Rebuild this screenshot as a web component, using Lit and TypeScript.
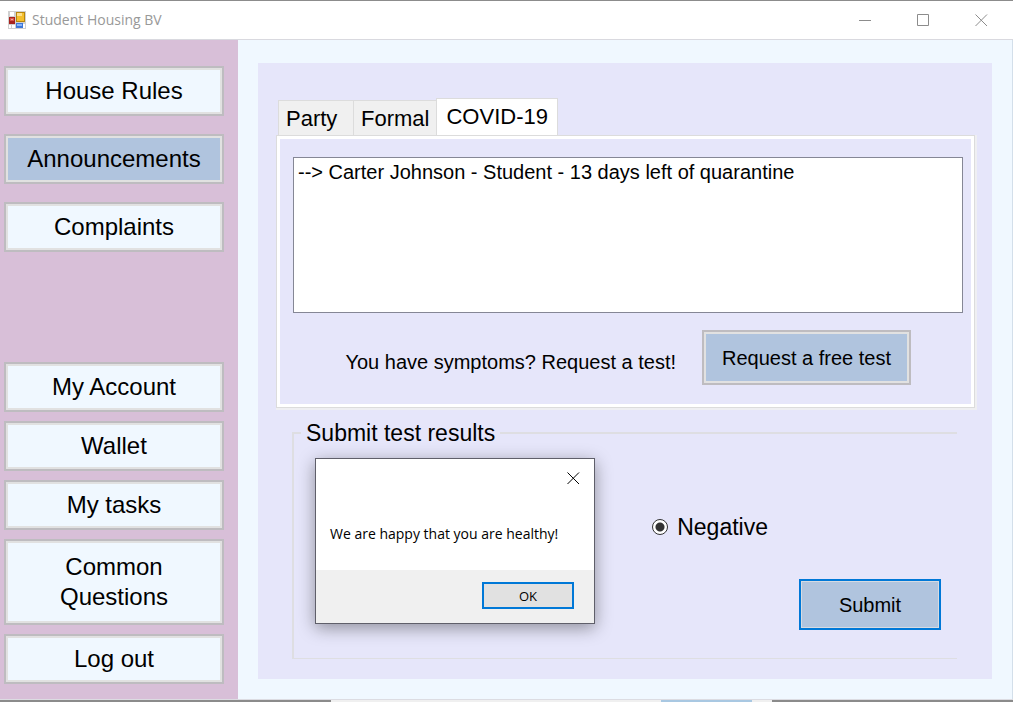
import { LitElement, html, css, svg } from "lit";
import { customElement, state } from "lit/decorators.js";

const mainLinks = ["House Rules", "Announcements", "Complaints"];
const accountLinks = ["My Account", "Wallet", "My tasks", "Common Questions", "Log out"];
const tabs = ["Party", "Formal", "COVID-19"];

const closeGlyph = svg`<path d="M.5 .5 12 12M12 .5 .5 12" />`;

@customElement("app-root")
export class AppRoot extends LitElement {
  @state() private section = "Announcements";
  @state() private tab = "COVID-19";
  @state() private dialogOpen = true;

  static styles = css`
    :host {
      display: grid;
      grid-template-rows: auto 1fr auto;
      min-height: 100vh;
      box-sizing: border-box;
      font-family: "Liberation Sans", Arial, sans-serif;
      font-size: 22px;
      line-height: 26px;
      color: #000;
      background: #fff;
    }
    * { box-sizing: border-box; }
    button { font: inherit; color: inherit; margin: 0; cursor: pointer; }
    svg { display: block; }

    .titlebar {
      display: flex;
      align-items: center;
      height: 40px;
      padding: 0 3px 0 8px;
      border-top: 1px solid #8c8c8c;
      border-bottom: 1px solid #d9d9df;
      background: #fff;
      font-family: "Open Sans", "Noto Sans", sans-serif;
      color: #999;
    }
    .title {
      flex: 1;
      margin: 0 0 0 6px;
      font-size: 14px;
      line-height: 20px;
      font-weight: 400;
    }
    .caption {
      display: grid;
      place-items: center;
      width: 58px;
      height: 38px;
      padding: 0;
      border: 0;
      background: none;
    }
    .caption svg { fill: none; stroke: #8c8c8c; }

    .body { display: grid; grid-template-columns: 238px 1fr; }
    .sidebar {
      display: flex;
      flex-direction: column;
      justify-content: space-between;
      padding: 26px 14px 15px 4px;
      background: #d8bfd8;
    }
    .group { display: grid; gap: 18px; }
    .group.tight { gap: 9px; }
    .btn {
      padding: 6px 12px;
      border: 2px solid #bebcc0;
      box-shadow: inset 0 0 0 2px #e1e1e1;
      background: #b0c4de;
    }
    .nav {
      min-height: 50px;
      padding: 8px;
      font-size: 24px;
      line-height: 30px;
      background: #f0f8ff;
    }
    .nav.active { background: #b0c4de; }
    .nav.wrap { padding: 11px 48px; }

    .main {
      display: grid;
      padding: 23px 20px 20px;
      background: #f0f8ff;
      border-right: 1px solid #d3dfea;
    }
    .panel { padding: 35px 17px 20px 18px; background: #e6e6fa; }

    .tabs { display: flex; align-items: flex-end; padding-left: 2px; }
    .tab {
      height: 35px;
      padding: 2px 7px 0;
      min-width: 75px;
      text-align: left;
      border: 1px solid #dcdcdc;
      border-width: 1px 0 0 1px;
      background: #f0f0f0;
    }
    .tab.active {
      height: 37px;
      padding: 0 9px;
      border-width: 1px 1px 0;
      background: #fff;
    }
    .page {
      padding: 21px 11px 22px 16px;
      border: 1px solid #dcdcdc;
      box-shadow: inset 0 0 0 3px #fff, 1px 1px 0 1px #efeff2;
    }
    .list {
      display: block;
      width: 100%;
      height: 156px;
      padding: 2px 2px;
      border: 1px solid #858795;
      border-radius: 0;
      background: #fff;
      font: inherit;
      font-size: 20px;
      color: #000;
      overflow: hidden;
      outline: 0;
    }
    .list option { padding: 1px 2px; min-height: 26px; }
    .request {
      display: flex;
      align-items: center;
      justify-content: flex-end;
      gap: 26px;
      margin: 17px 52px 0 0;
      font-size: 20px;
    }
    .request .btn { height: 55px; padding: 0 18px; }
    .request p { margin: 8px 0 0; }

    .results {
      position: relative;
      min-width: 0;
      margin: 12px 18px 0 16px;
      padding: 68px 16px 28px 0;
      border: 1px solid #dedee2;
      border-width: 2px 0 1px 2px;
    }
    .results legend { margin-left: 7px; padding: 0 5px; font-size: 23px; }
    .choice {
      display: flex;
      align-items: center;
      justify-content: flex-end;
      gap: 9px;
      padding-right: 173px;
      font-size: 23px;
    }
    .radio {
      appearance: none;
      width: 16px;
      height: 16px;
      margin: 0;
      border: 1px solid #333;
      border-radius: 50%;
      background: radial-gradient(circle, #333 0 4px, #fff 5px);
    }
    .actions { display: flex; justify-content: flex-end; margin-top: 39px; }
    .submit {
      width: 142px;
      height: 51px;
      padding: 0;
      border: 2px solid #0078d7;
      box-shadow: inset 0 0 0 1px #d6dbe2;
      background: #b0c4de;
      font-size: 20px;
    }

    .dialog {
      position: absolute;
      top: 12px;
      left: 21px;
      width: 280px;
      border: 1px solid #5f5f6a;
      background: #fff;
      box-shadow: 0 4px 16px rgb(0 0 0 / 38%);
      font-family: "Open Sans", "Noto Sans", sans-serif;
      font-size: 13px;
      line-height: 18px;
    }
    .dialog-head { display: flex; justify-content: flex-end; }
    .dialog-close {
      display: grid;
      place-items: center;
      width: 42px;
      height: 38px;
      padding: 0;
      border: 0;
      background: none;
    }
    .dialog-close svg { fill: none; stroke: #000; }
    .dialog p { margin: 28px 14px 27px; font-size: 14px; white-space: nowrap; }
    .dialog-foot {
      display: flex;
      justify-content: flex-end;
      padding: 12px 20px 14px;
      background: #f0f0f0;
    }
    .ok {
      width: 92px;
      height: 27px;
      padding: 0;
      border: 2px solid #0078d7;
      background: #e1e1e1;
    }

    .edge {
      display: grid;
      grid-template-columns: 331fr 330fr 91fr 20fr 241fr;
      height: 3px;
      border-top: 1px solid #dcdce2;
    }
    .edge .dark { background: #8b8b8b; }
    .edge .light { background: #f0f0f0; }
    .edge .blue { background: #a9c8e2; }
  `;

  private navButton(label: string) {
    const active = label === this.section ? "active" : "";
    const wrap = label === "Common Questions" ? "wrap" : "";
    return html`<button class="btn nav ${active} ${wrap}" @click=${() => (this.section = label)}>${label}</button>`;
  }

  render() {
    return html`
      <header class="titlebar">
        <svg width="18" height="18" viewBox="0 0 18 18" aria-hidden="true">
          <path fill="#d0d0d0" d="M0 0h18v18H0z" />
          <path fill="#fff" d="M2 1h4v4H2zM1 14h2v3H1zM4 14h3v3H4zM15 13h2v4h-2z" />
          <path fill="#a8231d" d="M1 6h6v7H1z" />
          <path fill="#d9534a" d="M2 7h4v3H2z" />
          <path fill="#f0a59d" d="M3 8h2v1H3z" />
          <path fill="#b8860b" d="M8 1h9v10H8z" />
          <path fill="#f4bf2e" d="M9 2h7v8H9z" />
          <path fill="#fde08a" d="M9 2h5v3H9z" />
          <path fill="#3d76d8" d="M8 12h7v5H8z" />
          <path fill="#8ab4f5" d="M9 13h5v2H9z" />
        </svg>
        <h1 class="title">Student Housing BV</h1>
        <button class="caption" aria-label="Minimize">
          <svg width="12" height="13"><path d="M0 6.5h12" /></svg>
        </button>
        <button class="caption" aria-label="Maximize">
          <svg width="12" height="12"><path d="M.5 .5h11v11H.5z" /></svg>
        </button>
        <button class="caption" aria-label="Close">
          <svg width="13" height="13">${closeGlyph}</svg>
        </button>
      </header>

      <div class="body">
        <nav class="sidebar">
          <div class="group">${mainLinks.map((l) => this.navButton(l))}</div>
          <div class="group tight">${accountLinks.map((l) => this.navButton(l))}</div>
        </nav>

        <main class="main">
          <div class="panel">
            <div class="tabs" role="tablist">
              ${tabs.map(
                (t) => html`<button
                  class="tab ${t === this.tab ? "active" : ""}"
                  role="tab"
                  aria-selected=${t === this.tab}
                  @click=${() => (this.tab = t)}
                >${t}</button>`
              )}
            </div>
            <section class="page" role="tabpanel">
              <select class="list" size="5" aria-label="Residents in quarantine">
                <option>--&gt; Carter Johnson - Student - 13 days left of quarantine</option>
              </select>
              <div class="request">
                <p>You have symptoms? Request a test!</p>
                <button class="btn">Request a free test</button>
              </div>
            </section>

            <fieldset class="results">
              <legend>Submit test results</legend>
              <div class="choice">
                <input class="radio" type="radio" id="negative" name="result" checked />
                <label for="negative">Negative</label>
              </div>
              <div class="actions"><button class="submit">Submit</button></div>
              ${this.dialogOpen
                ? html`<div class="dialog" role="dialog" aria-label="Message">
                    <div class="dialog-head">
                      <button class="dialog-close" aria-label="Close" @click=${() => (this.dialogOpen = false)}>
                        <svg width="13" height="13">${closeGlyph}</svg>
                      </button>
                    </div>
                    <p>We are happy that you are healthy!</p>
                    <div class="dialog-foot">
                      <button class="ok" @click=${() => (this.dialogOpen = false)}>OK</button>
                    </div>
                  </div>`
                : null}
            </fieldset>
          </div>
        </main>
      </div>

      <div class="edge">
        <span class="dark"></span><span class="light"></span><span class="blue"></span><span class="light"></span><span class="dark"></span>
      </div>
    `;
  }
}
